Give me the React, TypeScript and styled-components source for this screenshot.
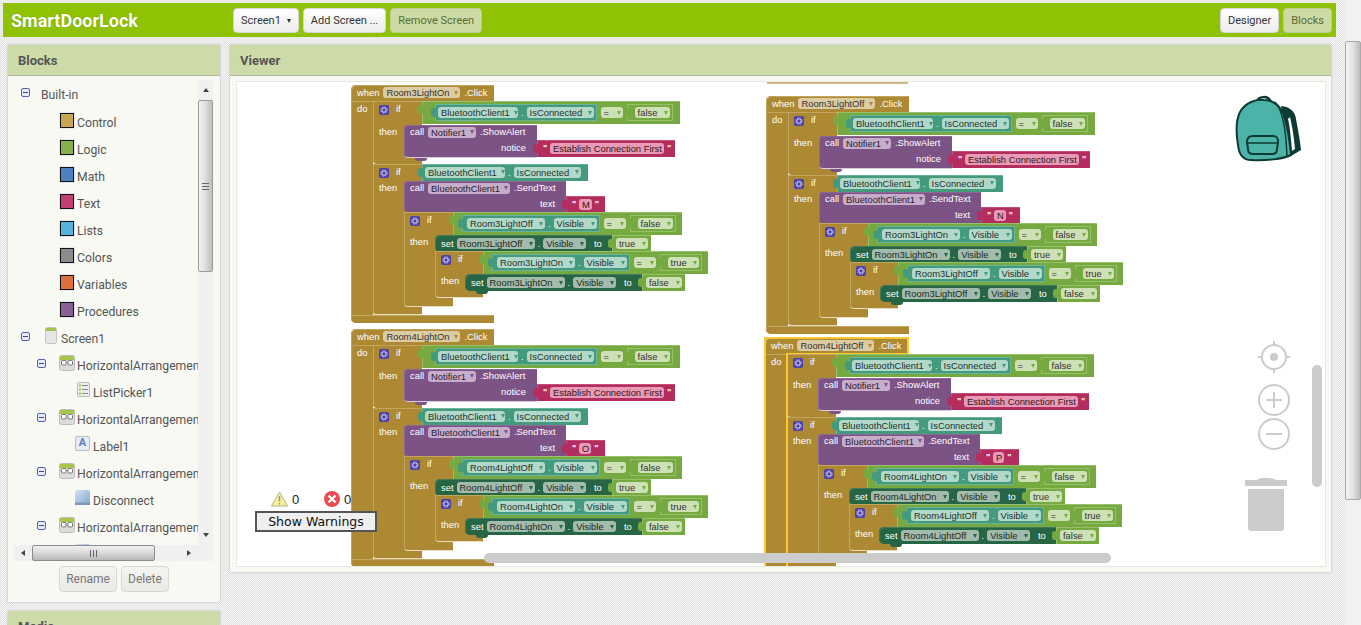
import React from 'react';
import styled, { createGlobalStyle, css } from 'styled-components';

const GlobalStyle = createGlobalStyle`
  html, body {
    margin: 0;
    padding: 0;
    height: 625px;
    overflow: hidden;
  }
  body {
    font-family: Roboto, "Liberation Sans", Arial, sans-serif;
    color: #555;
    background: repeating-conic-gradient(#e2e2e2 0 25%, #f4f4f4 0 50%) 0 0 / 2px 2px;
  }
`;

type Tone = 'control' | 'logic' | 'getter' | 'setter' | 'call' | 'text';

const TONES: Record<Tone, { fill: string; chip: string; edge: string; text: string }> = {
  control: { fill: '#ad8934', chip: '#dcccA4', edge: '#c2a55f', text: '#333' },
  logic: { fill: '#76aa40', chip: '#cde0b6', edge: '#97c06b', text: '#333' },
  getter: { fill: '#439a7c', chip: '#b2d8ca', edge: '#6bb49b', text: '#22332c' },
  setter: { fill: '#266645', chip: '#a3bbac', edge: '#3f7a5c', text: '#1d2a22' },
  call: { fill: '#7c5385', chip: '#c6aecb', edge: '#8d6896', text: '#2b2030' },
  text: { fill: '#b32d5e', chip: '#e89ab6', edge: '#c24e79', text: '#331420' },
};

/* ---------- page ---------- */

const Page = styled.div`
  display: flex;
  width: 1361px;
  height: 625px;
  overflow: hidden;
`;

const Main = styled.div`
  flex: 1;
  min-width: 0;
  display: flex;
  flex-direction: column;
`;

const TopBar = styled.header`
  display: flex;
  align-items: center;
  gap: 4px;
  height: 34px;
  margin: 3px 9px 8px 3px;
  padding-right: 4px;
  background: #8fc202;
  box-sizing: border-box;
`;

const AppTitle = styled.div`
  width: 226px;
  padding-left: 8px;
  box-sizing: border-box;
  font-size: 18px;
  font-weight: 700;
  color: #fff;
  text-shadow: 0 0 1px rgba(70, 90, 0, 0.6);
`;

const Spacer = styled.div`
  flex: 1;
`;

const Button = styled.button<{ $active?: boolean }>`
  height: 25px;
  padding: 0 7px;
  border: 1px solid ${(p) => (p.$active ? '#bccb96' : '#d5d5d5')};
  border-radius: 4px;
  font-family: inherit;
  font-size: 11px;
  white-space: nowrap;
  color: ${(p) => (p.$active ? '#5c6b3a' : '#333')};
  background: ${(p) => (p.$active ? '#cbdba3' : 'linear-gradient(#fff, #ececec)')};
`;

const Caret = styled.span`
  display: inline-block;
  margin-left: 6px;
  vertical-align: middle;
  border-left: 2.5px solid transparent;
  border-right: 2.5px solid transparent;
  border-top: 4px solid #333;
`;

const Content = styled.div`
  flex: 1;
  display: flex;
  gap: 10px;
  padding-left: 8px;
  padding-right: 14px;
  min-height: 0;
`;

const LeftColumn = styled.div`
  display: flex;
  flex-direction: column;
  gap: 9px;
  width: 212px;
  flex: none;
`;

const Panel = styled.section<{ $height: number; $grow?: boolean }>`
  display: flex;
  flex-direction: column;
  flex: ${(p) => (p.$grow ? '1' : 'none')};
  height: ${(p) => p.$height}px;
  background: #f8f9f3;
  box-shadow: 0 0 2px rgba(0, 0, 0, 0.25);
`;

const PanelHead = styled.h2`
  flex: none;
  height: 30px;
  margin: 0;
  padding-left: 10px;
  font-size: 13px;
  font-weight: 700;
  line-height: 32px;
  color: #555;
  background: #cddba8;
  border-bottom: 1px solid #b3b8a0;
`;

/* ---------- tree ---------- */

const TreeFrame = styled.div`
  display: grid;
  grid-template-columns: 184px 15px;
  grid-template-rows: 465px 16px;
  margin: 4px 7px 0 6px;
  height: 481px;
`;

const TreeList = styled.ul`
  margin: 0;
  padding: 0;
  list-style: none;
  overflow: hidden;
`;

const TreeRow = styled.li<{ $indent: number }>`
  display: flex;
  align-items: center;
  height: 27px;
  padding-left: ${(p) => p.$indent}px;
  white-space: nowrap;
  &:first-child {
    height: 28px;
    padding-bottom: 1px;
    box-sizing: border-box;
  }
`;

const TreeLabel = styled.span<{ $lead?: number }>`
  font-size: 12.2px;
  color: #555;
  padding-top: 2px;
  padding-left: ${(p) => p.$lead ?? 0}px;
`;

const Toggle = styled.span<{ $gap: number }>`
  position: relative;
  flex: none;
  width: 9px;
  height: 9px;
  margin-right: ${(p) => p.$gap}px;
  margin-top: -3px;
  border: 1px solid #5562ad;
  border-radius: 2px;
  background: #e8ecf6;
  box-sizing: border-box;
  &::after {
    content: '';
    position: absolute;
    left: 1px;
    right: 1px;
    top: 3px;
    height: 1px;
    background: #3443a0;
  }
`;

const Swatch = styled.span<{ $color: string }>`
  flex: none;
  width: 12px;
  height: 13px;
  margin-right: 3px;
  margin-top: -3px;
  border: 1px solid #111;
  outline: 1px solid #e3e8ee;
  background: ${(p) => p.$color};
`;

const ComponentIcon = styled.span`
  display: flex;
  flex: none;
  margin-right: 2px;
  margin-top: -4px;
`;

const LabelGlyph = styled.span`
  display: block;
  width: 15px;
  height: 15px;
  border: 1px solid #bbb;
  border-radius: 2px;
  box-sizing: border-box;
  background: #e6ecf7;
  text-align: center;
  font-size: 11px;
  font-weight: 700;
  line-height: 12px;
  color: #5b7fc0;
`;

const ScreenIcon = () => (
  <svg width="12" height="17" viewBox="0 0 12 17">
    <rect x="0.5" y="0.5" width="11" height="16" rx="2" fill="#e6e6e6" stroke="#c4c4c4" />
    <rect x="1" y="1" width="10" height="3" fill="#a6c24a" />
  </svg>
);

const ArrangementIcon = () => (
  <svg width="16" height="16" viewBox="0 0 16 16">
    <rect x="0.5" y="0.5" width="15" height="15" rx="2" fill="#dcdcdc" stroke="#bdbdbd" />
    <rect x="1" y="1" width="14" height="4" fill="#a8c64a" />
    <rect x="2.5" y="5.5" width="4.5" height="4.5" rx="1" fill="#fff" stroke="#777" />
    <rect x="9" y="5.5" width="4.5" height="4.5" rx="1" fill="#fff" stroke="#777" />
  </svg>
);

const ListIcon = () => (
  <svg width="13" height="15" viewBox="0 0 13 15">
    <rect x="0.5" y="0.5" width="12" height="14" rx="1.5" fill="#ececec" stroke="#bdbdbd" />
    <path d="M5 3.5h6M5 7.5h6M5 11.5h6" stroke="#888" />
    <path d="M2 3.5h2M2 7.5h2M2 11.5h2" stroke="#a8c64a" strokeWidth="2" />
  </svg>
);

const ButtonIcon = () => (
  <svg width="15" height="15" viewBox="0 0 15 15">
    <defs>
      <linearGradient id="btnGrad" x1="0" y1="0" x2="1" y2="1">
        <stop offset="0" stopColor="#d3e0f2" />
        <stop offset="0.55" stopColor="#a9c0e2" />
        <stop offset="1" stopColor="#8aa6d0" />
      </linearGradient>
    </defs>
    <rect x="0" y="0" width="15" height="15" rx="2" fill="url(#btnGrad)" />
    <rect x="0" y="12.5" width="15" height="2.5" fill="#7e97bf" />
  </svg>
);

const ScrollV = styled.div`
  display: flex;
  flex-direction: column;
  background: #f0f0f0;
`;

const ScrollH = styled.div`
  display: flex;
  align-items: stretch;
  background: #f0f0f0;
`;

const ArrowCell = styled.div<{ $dir: 'up' | 'down' | 'left' | 'right' }>`
  flex: none;
  display: flex;
  align-items: center;
  justify-content: center;
  width: ${(p) => (p.$dir === 'up' || p.$dir === 'down' ? '100%' : '18px')};
  height: ${(p) => (p.$dir === 'up' || p.$dir === 'down' ? '20px' : '100%')};
  &::after {
    content: '';
    width: 0;
    height: 0;
    ${(p) =>
      p.$dir === 'up' &&
      css`
        border-left: 3px solid transparent;
        border-right: 3px solid transparent;
        border-bottom: 4px solid #444;
      `}
    ${(p) =>
      p.$dir === 'down' &&
      css`
        border-left: 3px solid transparent;
        border-right: 3px solid transparent;
        border-top: 4px solid #444;
      `}
    ${(p) =>
      p.$dir === 'left' &&
      css`
        border-top: 3px solid transparent;
        border-bottom: 3px solid transparent;
        border-right: 4px solid #444;
      `}
    ${(p) =>
      p.$dir === 'right' &&
      css`
        border-top: 3px solid transparent;
        border-bottom: 3px solid transparent;
        border-left: 4px solid #444;
      `}
  }
`;

const ThumbV = styled.div<{ $height: number }>`
  flex: none;
  display: flex;
  align-items: center;
  justify-content: center;
  height: ${(p) => p.$height}px;
  border: 1px solid #9a9a9a;
  border-radius: 2px;
  box-sizing: border-box;
  background: linear-gradient(90deg, #f2f2f2, #e0e0e0 45%, #bdbdbd);
`;

const ThumbH = styled.div<{ $width: number }>`
  flex: none;
  display: flex;
  align-items: center;
  justify-content: center;
  width: ${(p) => p.$width}px;
  border: 1px solid #8c8c8c;
  border-radius: 2px;
  box-sizing: border-box;
  background: linear-gradient(#f0f0f0, #dcdcdc 45%, #b8b8b8);
`;

const GripV = styled.span`
  width: 7px;
  height: 7px;
  background: repeating-linear-gradient(#666 0 1px, transparent 1px 3px);
`;

const GripH = styled.span`
  width: 7px;
  height: 7px;
  background: repeating-linear-gradient(90deg, #666 0 1px, transparent 1px 3px);
`;

const ScrollFill = styled.div`
  flex: 1;
`;

const TreeCorner = styled.div`
  background: #f0f0f0;
`;

const PanelActions = styled.div`
  display: flex;
  justify-content: center;
  gap: 4px;
  margin-top: 5px;
`;

const ActionButton = styled.button`
  height: 26px;
  padding: 0 6px;
  border: 1px solid #d8d8d0;
  border-radius: 4px;
  background: linear-gradient(#f4f4f0, #e9e9e5);
  font-family: inherit;
  font-size: 12px;
  color: #777;
`;

/* ---------- viewer ---------- */

const ViewerBody = styled.div`
  flex: 1;
  padding: 6px 6px 6px 7px;
`;

const Canvas = styled.div`
  position: relative;
  height: 484px;
  overflow: hidden;
  background: #fff;
  box-shadow: 0 0 0 1px #e8e8e0;
`;

/* canvas coordinates are the block positions in the workspace */
const Group = styled.div<{ $x: number; $y: number }>`
  position: absolute;
  left: ${(p) => p.$x}px;
  top: ${(p) => p.$y}px;
  font-family: "Liberation Sans", Arial, sans-serif;
  font-size: 9.4px;
  color: #fff;
`;

type Box = { $x: number; $y: number; $w: number; $h: number; $tone: Tone };

const Piece = styled.div<Box & { $tab?: boolean; $bump?: boolean; $round?: string; $footer?: boolean }>`
  position: absolute;
  left: ${(p) => p.$x}px;
  top: ${(p) => p.$y}px;
  width: ${(p) => p.$w}px;
  height: ${(p) => p.$h}px;
  display: flex;
  align-items: center;
  box-sizing: border-box;
  white-space: nowrap;
  background: ${(p) => TONES[p.$tone].fill};
  box-shadow: inset 1px 1px 0 ${(p) => TONES[p.$tone].edge}
    ${(p) => (p.$footer ? ', inset 0 -1px 0 rgba(255, 255, 255, 0.7)' : '')};
  ${(p) => p.$round && `border-radius: ${p.$round};`}
  ${(p) =>
    p.$tab &&
    css`
      &::before {
        content: '';
        position: absolute;
        left: -4px;
        top: 4px;
        width: 5px;
        height: 9px;
        border-radius: 3px 0 0 3px;
        background: inherit;
      }
    `}
  ${(p) =>
    p.$bump &&
    css`
      &::after {
        content: '';
        position: absolute;
        left: 11px;
        bottom: -3px;
        width: 12px;
        height: 3px;
        border-radius: 0 0 5px 5px;
        background: inherit;
      }
    `}
`;

const Outline = styled.div<{ $x: number; $y: number; $w: number; $h: number }>`
  position: absolute;
  left: ${(p) => p.$x}px;
  top: ${(p) => p.$y}px;
  width: ${(p) => p.$w}px;
  height: ${(p) => p.$h}px;
  background: #fdc832;
`;

const Word = styled.span<{ $x: number; $y: number }>`
  position: absolute;
  left: ${(p) => p.$x}px;
  top: ${(p) => p.$y}px;
  line-height: 12px;
  white-space: nowrap;
`;

const Row = styled.div<{ $gap?: number; $pad?: number; $lift?: boolean }>`
  display: flex;
  align-items: center;
  gap: ${(p) => p.$gap ?? 3}px;
  padding-left: ${(p) => p.$pad ?? 0}px;
  ${(p) => p.$lift && 'margin-top: -1px;'}
`;

const Chip = styled.span<{ $tone: Tone; $menu?: boolean; $wide?: number }>`
  display: inline-flex;
  align-items: center;
  gap: 4px;
  height: 11px;
  padding: 0 2px 0 3px;
  ${(p) => p.$wide && `width: ${p.$wide}px; justify-content: space-between;`}
  box-sizing: border-box;
  border-radius: 3px;
  line-height: 11px;
  white-space: nowrap;
  background: ${(p) => TONES[p.$tone].chip};
  color: ${(p) => TONES[p.$tone].text};
  ${(p) =>
    p.$menu &&
    css`
      &::after {
        content: '';
        flex: none;
        width: 0;
        height: 0;
        border-left: 2.5px solid transparent;
        border-right: 2.5px solid transparent;
        border-top: 4px solid ${TONES[p.$tone].fill};
      }
    `}
`;

const Inner = styled.div<{ $tone: Tone; $pad?: number }>`
  position: relative;
  flex: none;
  display: flex;
  align-items: center;
  gap: 3px;
  height: 17px;
  padding: 0 3px 0 ${(p) => p.$pad ?? 3}px;
  box-sizing: border-box;
  background: ${(p) => TONES[p.$tone].fill};
  box-shadow: inset 0 0 0 1px ${(p) => TONES[p.$tone].edge};
  &::before {
    content: '';
    position: absolute;
    left: -4px;
    top: 4px;
    width: 5px;
    height: 9px;
    border-radius: 3px 0 0 3px;
    background: inherit;
  }
`;

const Quote = styled.span`
  width: 4px;
  height: 11px;
  font-size: 9px;
  font-weight: 700;
  line-height: 10px;
`;

const MutatorIcon = () => (
  <svg width="10" height="10" viewBox="0 0 10 10">
    <rect width="10" height="10" rx="2" fill="#4d3fa6" />
    <circle cx="5" cy="5" r="2.2" fill="none" stroke="#c9c5ea" strokeWidth="1.1" />
    <circle cx="5" cy="5" r="3.4" fill="none" stroke="#c9c5ea" strokeWidth="0.8" strokeDasharray="1.3 1.4" />
  </svg>
);

const MutatorSlot = styled.span<{ $x: number; $y: number }>`
  position: absolute;
  display: flex;
  left: ${(p) => p.$x}px;
  top: ${(p) => p.$y}px;
`;

const IfBlock = ({ x, y, w, h, then, last }: { x: number; y: number; w: number; h: number; then: number; last?: boolean }) => (
  <>
    <Piece $tone="control" $footer={last} $x={x} $y={y} $w={w} $h={h} $round="0 0 0 4px" />
    <MutatorSlot $x={x + 6} $y={y + 4}>
      <MutatorIcon />
    </MutatorSlot>
    <Word $x={x + 23} $y={y + 2}>if</Word>
    <Word $x={x + 6} $y={y + then - 6}>then</Word>
  </>
);

const valueWidth = (value: string) => (value === 'false' ? 35 : 31);

const Getter = ({ comp, prop, pad, compW, propW }: { comp: string; prop: string; pad?: number; compW: number; propW: number }) => (
  <Inner $tone="getter" $pad={pad}>
    <Chip $tone="getter" $menu $wide={compW}>{comp}</Chip>
    <span>.</span>
    <Chip $tone="getter" $menu $wide={propW}>{prop}</Chip>
  </Inner>
);

const BoolValue = ({ value }: { value: string }) => (
  <Inner $tone="logic" $pad={8}>
    <Chip $tone="logic" $menu $wide={valueWidth(value)}>{value}</Chip>
  </Inner>
);

const Compare = ({ x, y, w, pad, comp, prop, value, compW, propW, innerPad }: {
  x: number; y: number; w: number; pad: number; comp: string; prop: string; value: string;
  compW: number; propW: number; innerPad?: number;
}) => (
  <Piece $tone="logic" $tab $x={x} $y={y} $w={w} $h={23}>
    <Row $pad={pad} $gap={4}>
      <Getter comp={comp} prop={prop} compW={compW} propW={propW} pad={innerPad} />
      <Chip $tone="logic" $menu $wide={22}>=</Chip>
      <BoolValue value={value} />
    </Row>
  </Piece>
);

const Setter = ({ x, y, comp, value, valueW }: { x: number; y: number; comp: string; value: string; valueW: number }) => (
  <>
    <Piece $tone="setter" $bump $x={x} $y={y} $w={177} $h={17} $round="5px 0 0 5px">
      <Row $pad={6} $gap={3}>
        <span>set</span>
        <Chip $tone="setter" $menu $wide={78}>{comp}</Chip>
        <span>.</span>
        <Chip $tone="setter" $menu $wide={43}>Visible</Chip>
      </Row>
      <Word $x={159} $y={3}>to</Word>
    </Piece>
    <Piece $tone="logic" $tab $x={x + 177} $y={y} $w={valueW} $h={17}>
      <Row $pad={4}>
        <Chip $tone="logic" $menu $wide={valueW - 7}>{value}</Chip>
      </Row>
    </Piece>
  </>
);

const CallBlock = ({ x, y, w, h, comp, method, arg, argX, bump }: {
  x: number; y: number; w: number; h: number; comp: string; method: string; arg: string; argX: number; bump?: boolean;
}) => (
  <Piece $tone="call" $bump={bump} $footer={bump} $x={x} $y={y} $w={w} $h={h} $round="4px 0 0 4px">
    <Word $x={6} $y={1}>
      <Row $gap={4}>
        <span>call</span>
        <Chip $tone="call" $menu>{comp}</Chip>
        <span>{method}</span>
      </Row>
    </Word>
    <Word $x={argX} $y={17}>{arg}</Word>
  </Piece>
);

const TextValue = ({ x, y, w, text }: { x: number; y: number; w: number; text: string }) => (
  <Piece $tone="text" $tab $x={x} $y={y} $w={w} $h={17}>
    <Row $pad={6} $gap={3}>
      <Quote>"</Quote>
      <Chip $tone="text">{text}</Chip>
      <Quote>"</Quote>
    </Row>
  </Piece>
);

type LightProps = {
  x: number;
  y: number;
  name: string;
  letter: string;
  first: string;
  second: string;
  selected?: boolean;
};

const LightHandler = ({ x, y, name, letter, first, second, selected }: LightProps) => (
  <Group $x={x} $y={y}>
    <Piece $tone="control" $x={0} $y={0} $w={143} $h={16} $round="5px 0 0 0">
      <Row $pad={6} $gap={4} $lift>
        <span>when</span>
        <Chip $tone="control" $menu $wide={77}>{name}</Chip>
        <span>.Click</span>
      </Row>
    </Piece>
    <Piece $tone="control" $x={0} $y={16} $w={22} $h={222} $round="0 0 0 5px" />
    <Piece $tone="control" $x={0} $y={230} $w={143} $h={8} $round="0 0 0 5px" />
    <Word $x={6} $y={18}>do</Word>

    <IfBlock x={22} y={16} w={49} h={63} then={31} />
    <Compare x={71} y={16} w={258} pad={13} comp="BluetoothClient1" prop="IsConnected" value="false" compW={80} propW={67} />
    <CallBlock x={53} y={40} w={133} h={33} comp="Notifier1" method=".ShowAlert" arg="notice" argX={97} bump />
    <TextValue x={186} y={55} w={138} text="Establish Connection First" />

    <IfBlock x={22} y={79} w={49} h={151} then={24} last />
    <Piece $tone="getter" $tab $x={71} $y={79} $w={166} $h={17}>
      <Row $pad={3} $lift>
        <Chip $tone="getter" $menu $wide={80}>BluetoothClient1</Chip>
        <span>.</span>
        <Chip $tone="getter" $menu $wide={67}>IsConnected</Chip>
      </Row>
    </Piece>
    <CallBlock x={53} y={96} w={162} h={31} comp="BluetoothClient1" method=".SendText" arg="text" argX={136} />
    <TextValue x={215} y={111} w={39} text={letter} />

    <IfBlock x={53} y={127} w={49} h={95} then={30} last />
    <Compare x={102} y={127} w={229} pad={9} comp={first} prop="Visible" value="false" compW={78} propW={43} innerPad={5} />
    <Setter x={84} y={150} comp={first} value="true" valueW={39} />

    <IfBlock x={84} y={166} w={48} h={47} then={30} last />
    <Compare x={132} y={166} w={225} pad={9} comp={second} prop="Visible" value="true" compW={78} propW={43} innerPad={5} />
    <Setter x={114} y={189} comp={second} value="false" valueW={43} />

    {selected && (
      <>
        <Outline $x={-1} $y={-1} $w={145} $h={2} />
        <Outline $x={-1} $y={-1} $w={2} $h={240} />
        <Outline $x={142} $y={-1} $w={2} $h={17} />
        <Outline $x={21} $y={15} $w={123} $h={1} />
        <Outline $x={21} $y={15} $w={2} $h={225} />
      </>
    )}
  </Group>
);

const PrevFooter = styled.div`
  position: absolute;
  left: 530px;
  top: 0;
  width: 141px;
  height: 2px;
  background: #cdb98a;
`;

const Backpack = styled.svg`
  position: absolute;
  left: 998px;
  top: 13px;
`;

const ViewControl = styled.svg<{ $x: number; $y: number }>`
  position: absolute;
  left: ${(p) => p.$x}px;
  top: ${(p) => p.$y}px;
`;

const WorkspaceBarH = styled.div`
  position: absolute;
  left: 247px;
  top: 471px;
  width: 627px;
  height: 10px;
  border-radius: 5px;
  background: #ccc;
`;

const WorkspaceBarV = styled.div`
  position: absolute;
  left: 1075px;
  top: 283px;
  width: 10px;
  height: 122px;
  border-radius: 5px;
  background: #ccc;
`;

const WarningBox = styled.div`
  position: absolute;
  left: 18px;
  top: 408px;
  width: 122px;
  font-family: "Liberation Sans", Arial, sans-serif;
`;

const WarningCounts = styled.div`
  display: flex;
  align-items: center;
  height: 18px;
  padding-left: 16px;
  margin-bottom: 3px;
  font-size: 13px;
  color: #222;
`;

const Count = styled.span`
  display: flex;
  align-items: center;
  gap: 4px;
  width: 57px;
`;

const WarningButton = styled.button`
  display: block;
  width: 122px;
  height: 21px;
  padding: 0;
  border: 2px solid #555;
  background: #efefef;
  font-family: "DejaVu Sans", sans-serif;
  font-size: 12.5px;
  color: #111;
`;

const ScrollPage = styled.div`
  flex: none;
  display: flex;
  flex-direction: column;
  width: 16px;
  background: #f1f1f1;
`;

const PageThumb = styled.div`
  flex: none;
  height: 459px;
  margin-top: 41px;
  border: 1px solid #aaa;
  border-radius: 2px;
  box-sizing: border-box;
  background: linear-gradient(90deg, #f4f4f4, #e2e2e2 50%, #bcbcbc);
`;

const PALETTE = [
  ['Control', '#c9a64f'],
  ['Logic', '#86b04e'],
  ['Math', '#4d82c0'],
  ['Text', '#c23f72'],
  ['Lists', '#55b3dc'],
  ['Colors', '#8c8c8c'],
  ['Variables', '#dd703a'],
  ['Procedures', '#8a6096'],
];

const App = () => {
  return (
    <Page>
      <GlobalStyle />
      <Main>
        <TopBar>
          <AppTitle>SmartDoorLock</AppTitle>
          <Button>
            Screen1<Caret />
          </Button>
          <Button>Add Screen ...</Button>
          <Button $active>Remove Screen</Button>
          <Spacer />
          <Button>Designer</Button>
          <Button $active>Blocks</Button>
        </TopBar>
        <Content>
          <LeftColumn>
            <Panel $height={557}>
              <PanelHead>Blocks</PanelHead>
              <TreeFrame>
                <TreeList>
                  <TreeRow $indent={7}>
                    <Toggle $gap={11} />
                    <TreeLabel>Built-in</TreeLabel>
                  </TreeRow>
                  {PALETTE.map(([name, color]) => (
                    <TreeRow key={name} $indent={46}>
                      <Swatch $color={color} />
                      <TreeLabel>{name}</TreeLabel>
                    </TreeRow>
                  ))}
                  <TreeRow $indent={7}>
                    <Toggle $gap={15} />
                    <ComponentIcon><ScreenIcon /></ComponentIcon>
                    <TreeLabel $lead={2}>Screen1</TreeLabel>
                  </TreeRow>
                  <TreeRow $indent={23}>
                    <Toggle $gap={13} />
                    <ComponentIcon><ArrangementIcon /></ComponentIcon>
                    <TreeLabel>HorizontalArrangement1</TreeLabel>
                  </TreeRow>
                  <TreeRow $indent={63}>
                    <ComponentIcon><ListIcon /></ComponentIcon>
                    <TreeLabel $lead={1}>ListPicker1</TreeLabel>
                  </TreeRow>
                  <TreeRow $indent={23}>
                    <Toggle $gap={13} />
                    <ComponentIcon><ArrangementIcon /></ComponentIcon>
                    <TreeLabel>HorizontalArrangement2</TreeLabel>
                  </TreeRow>
                  <TreeRow $indent={61}>
                    <ComponentIcon><LabelGlyph>A</LabelGlyph></ComponentIcon>
                    <TreeLabel $lead={1}>Label1</TreeLabel>
                  </TreeRow>
                  <TreeRow $indent={23}>
                    <Toggle $gap={13} />
                    <ComponentIcon><ArrangementIcon /></ComponentIcon>
                    <TreeLabel>HorizontalArrangement3</TreeLabel>
                  </TreeRow>
                  <TreeRow $indent={61}>
                    <ComponentIcon><ButtonIcon /></ComponentIcon>
                    <TreeLabel $lead={1}>Disconnect</TreeLabel>
                  </TreeRow>
                  <TreeRow $indent={23}>
                    <Toggle $gap={13} />
                    <ComponentIcon><ArrangementIcon /></ComponentIcon>
                    <TreeLabel>HorizontalArrangement4</TreeLabel>
                  </TreeRow>
                  <TreeRow $indent={61}>
                    <ComponentIcon><ButtonIcon /></ComponentIcon>
                    <TreeLabel $lead={1}>Connect</TreeLabel>
                  </TreeRow>
                </TreeList>
                <ScrollV>
                  <ArrowCell $dir="up" />
                  <ThumbV $height={172}><GripV /></ThumbV>
                  <ScrollFill />
                  <ArrowCell $dir="down" />
                </ScrollV>
                <ScrollH>
                  <ArrowCell $dir="left" />
                  <ThumbH $width={123}><GripH /></ThumbH>
                  <ScrollFill />
                  <ArrowCell $dir="right" />
                </ScrollH>
                <TreeCorner />
              </TreeFrame>
              <PanelActions>
                <ActionButton>Rename</ActionButton>
                <ActionButton>Delete</ActionButton>
              </PanelActions>
            </Panel>
            <Panel $height={60}>
              <PanelHead>Media</PanelHead>
            </Panel>
          </LeftColumn>

          <Panel $height={527} $grow>
            <PanelHead>Viewer</PanelHead>
            <ViewerBody>
              <Canvas>
                <PrevFooter />
                <LightHandler x={114} y={3} name="Room3LightOn" letter="M" first="Room3LightOff" second="Room3LightOn" />
                <LightHandler x={529} y={14} name="Room3LightOff" letter="N" first="Room3LightOn" second="Room3LightOff" />
                <LightHandler x={114} y={247} name="Room4LightOn" letter="O" first="Room4LightOff" second="Room4LightOn" />
                <LightHandler x={528} y={256} name="Room4LightOff" letter="P" first="Room4LightOn" second="Room4LightOff" selected />

                <Backpack width="67" height="68" viewBox="0 0 67 68">
                  <path d="M46 11C55 12 60 16 61 24C63 35 65 45 66 55L56 61L50 30Z" fill="#0d3a33" />
                  <path d="M55 22C57 30 59 42 60 54L57 56C56 44 55 32 53 24Z" fill="#fff" />
                  <path d="M22 7C23 1 33 0 36 7" fill="none" stroke="#0d3a33" strokeWidth="2.5" />
                  <path d="M3 50C1 38 1 25 5 17C10 8 20 4 29 5C38 5 44 10 48 18C52 30 55 48 56 60C48 64 30 66 16 65C8 65 4 60 3 50Z" fill="#4cb3a8" stroke="#0d3a33" strokeWidth="2" />
                  <path d="M40 7C47 14 51 34 52 62" fill="none" stroke="#0d3a33" strokeWidth="1.5" />
                  <path d="M12 47C12 43 14 41 18 41L38 41C42 41 43 43 43 47L42 54C42 57 40 59 37 59L18 59C14 59 13 57 13 54Z" fill="#4cb3a8" stroke="#0d3a33" strokeWidth="2" />
                  <path d="M12 48H43" stroke="#0d3a33" strokeWidth="1.5" />
                </Backpack>

                <ViewControl $x={1020} $y={258} width="34" height="34" viewBox="0 0 34 34" fill="none" stroke="#ccc" strokeWidth="2">
                  <circle cx="17" cy="17" r="12" />
                  <circle cx="17" cy="17" r="4" fill="#ccc" stroke="none" />
                  <path d="M17 1V5M17 29V33M1 17H5M29 17H33" />
                </ViewControl>
                <ViewControl $x={1020} $y={301} width="34" height="34" viewBox="0 0 34 34" fill="none" stroke="#ccc" strokeWidth="2">
                  <circle cx="17" cy="17" r="15" />
                  <path d="M17 9V25M9 17H25" />
                </ViewControl>
                <ViewControl $x={1020} $y={335} width="34" height="34" viewBox="0 0 34 34" fill="none" stroke="#ccc" strokeWidth="2">
                  <circle cx="17" cy="17" r="15" />
                  <path d="M9 17H25" />
                </ViewControl>
                <ViewControl $x={1008} $y={395} width="42" height="54" viewBox="0 0 42 54" fill="#ccc">
                  <path d="M12 3C14 0 26 0 31 3H42V9H0V3Z" />
                  <path d="M3 12H39V51C39 53 38 54 36 54H6C4 54 3 53 3 51Z" />
                </ViewControl>

                <WorkspaceBarH />
                <WorkspaceBarV />

                <WarningBox>
                  <WarningCounts>
                    <Count>
                      <svg width="17" height="16" viewBox="0 0 17 16">
                        <path d="M8.5 1L16.5 15H0.5Z" fill="#f6f29a" stroke="#b5b08a" strokeLinejoin="round" />
                        <path d="M8.5 5V10.5M8.5 12V13.5" stroke="#999" strokeWidth="1.6" />
                      </svg>
                      0
                    </Count>
                    <Count>
                      <svg width="16" height="16" viewBox="0 0 16 16">
                        <circle cx="8" cy="8" r="8" fill="#ea4a52" />
                        <path d="M4.5 4.5L11.5 11.5M11.5 4.5L4.5 11.5" stroke="#fff" strokeWidth="2.4" />
                      </svg>
                      0
                    </Count>
                  </WarningCounts>
                  <WarningButton>Show Warnings</WarningButton>
                </WarningBox>
              </Canvas>
            </ViewerBody>
          </Panel>
        </Content>
      </Main>
      <ScrollPage>
        <PageThumb />
      </ScrollPage>
    </Page>
  );
};

export default App;
